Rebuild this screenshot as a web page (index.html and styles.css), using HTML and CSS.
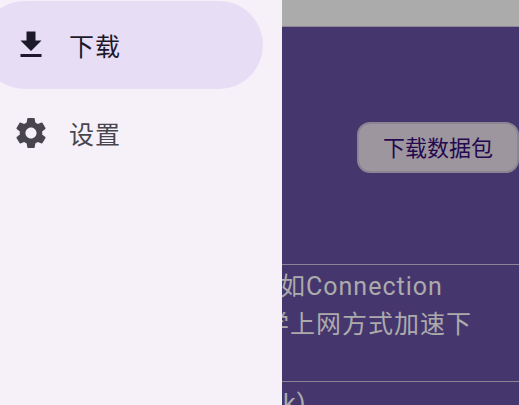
FILE: index.html
```html
<!DOCTYPE html>
<html lang="zh-CN">
<head>
<meta charset="utf-8">
<meta name="viewport" content="width=device-width, initial-scale=1">
<title>下载</title>
<link rel="stylesheet" href="styles.css">
</head>
<body>
<nav class="drawer">
  <a class="item active" href="#download">
    <svg class="icon" viewBox="0 0 24 24" aria-hidden="true"><path d="M19 9h-4V3H9v6H5l7 7 7-7zM5 18v2h14v-2H5z"/></svg>
    <span>下载</span>
  </a>
  <a class="item" href="#settings">
    <svg class="icon" viewBox="0 0 24 24" aria-hidden="true"><path d="M19.430 12.980c.04-.32.07-.64.07-.98s-.03-.66-.07-.98l2.110-1.650c.19-.15.24-.42.12-.64l-2-3.460c-.12-.22-.39-.3-.61-.22l-2.490 1c-.52-.4-1.080-.73-1.690-.98l-.38-2.650C14.460 2.180 14.250 2 14 2h-4c-.25 0-.46.18-.49.42l-.38 2.650c-.61.25-1.170.59-1.690.98l-2.490-1c-.23-.09-.49 0-.61.22l-2 3.460c-.13.22-.07.49.12.64l2.110 1.650c-.04.32-.07.65-.07.98s.03.66.07.98l-2.110 1.650c-.19.15-.24.42-.12.64l2 3.460c.12.22.39.3.61.22l2.490-1c.52.4 1.080.73 1.690.98l.38 2.650c.03.24.24.42.49.42h4c.25 0 .46-.18.49-.42l.38-2.650c.61-.25 1.170-.59 1.690-.98l2.490 1c.23.09.49 0 .61-.22l2-3.460c.12-.22.07-.49-.12-.64l-2.110-1.650zM12 15.700c-2.040 0-3.700-1.660-3.700-3.700s1.660-3.700 3.700-3.700 3.700 1.660 3.700 3.700-1.660 3.700-3.700 3.700z"/></svg>
    <span>设置</span>
  </a>
</nav>
<header class="status"></header>
<main>
  <div class="actions"><button class="package" type="button">下载数据包</button></div>
  <p class="note first">如Connection<br>学上网方式加速下</p>
  <p class="note second">k)</p>
</main>
</body>
</html>
```
FILE: styles.css
```css
* {
  box-sizing: border-box;
}

body {
  margin: 0;
  height: 100vh;
  overflow: hidden;
  position: relative;
  background: #46366e;
  font-family: Roboto, "Noto Sans CJK SC", sans-serif;
}

.drawer {
  position: absolute;
  top: 0;
  bottom: 0;
  left: 0;
  width: 282px;
  padding-top: 1px;
  background: #f6f1f9;
}

.item {
  display: flex;
  align-items: center;
  gap: 20px;
  height: 88px;
  margin: 0 19px 0 -19px;
  padding-left: 32px;
  border-radius: 44px;
  color: #49454e;
  font-size: 25px;
  letter-spacing: 1px;
  text-decoration: none;
}

.active {
  background: #e7def6;
  color: #1d192b;
}

.icon {
  width: 36px;
  height: 36px;
  fill: currentColor;
}

.status {
  height: 27px;
  background: #acabab;
  border-bottom: 1px solid #8c8697;
}

.actions {
  display: flex;
  justify-content: flex-end;
  padding: 95px 0 91px;
}

.package {
  height: 51px;
  padding: 0 24px 3px;
  border: 2px solid #8b8492;
  border-radius: 13px;
  background: #9d969f;
  color: #25084f;
  font: 22px Roboto, "Noto Sans CJK SC", sans-serif;
}

.note {
  margin: 0;
  padding: 3px 0 37px 264px;
  border-top: 1px solid #8b8492;
  color: #acabab;
  font-size: 25px;
  line-height: 38px;
  letter-spacing: 1px;
  white-space: nowrap;
}

.first {
  text-indent: 16px;
}

.second {
  text-indent: 19px;
}
```
